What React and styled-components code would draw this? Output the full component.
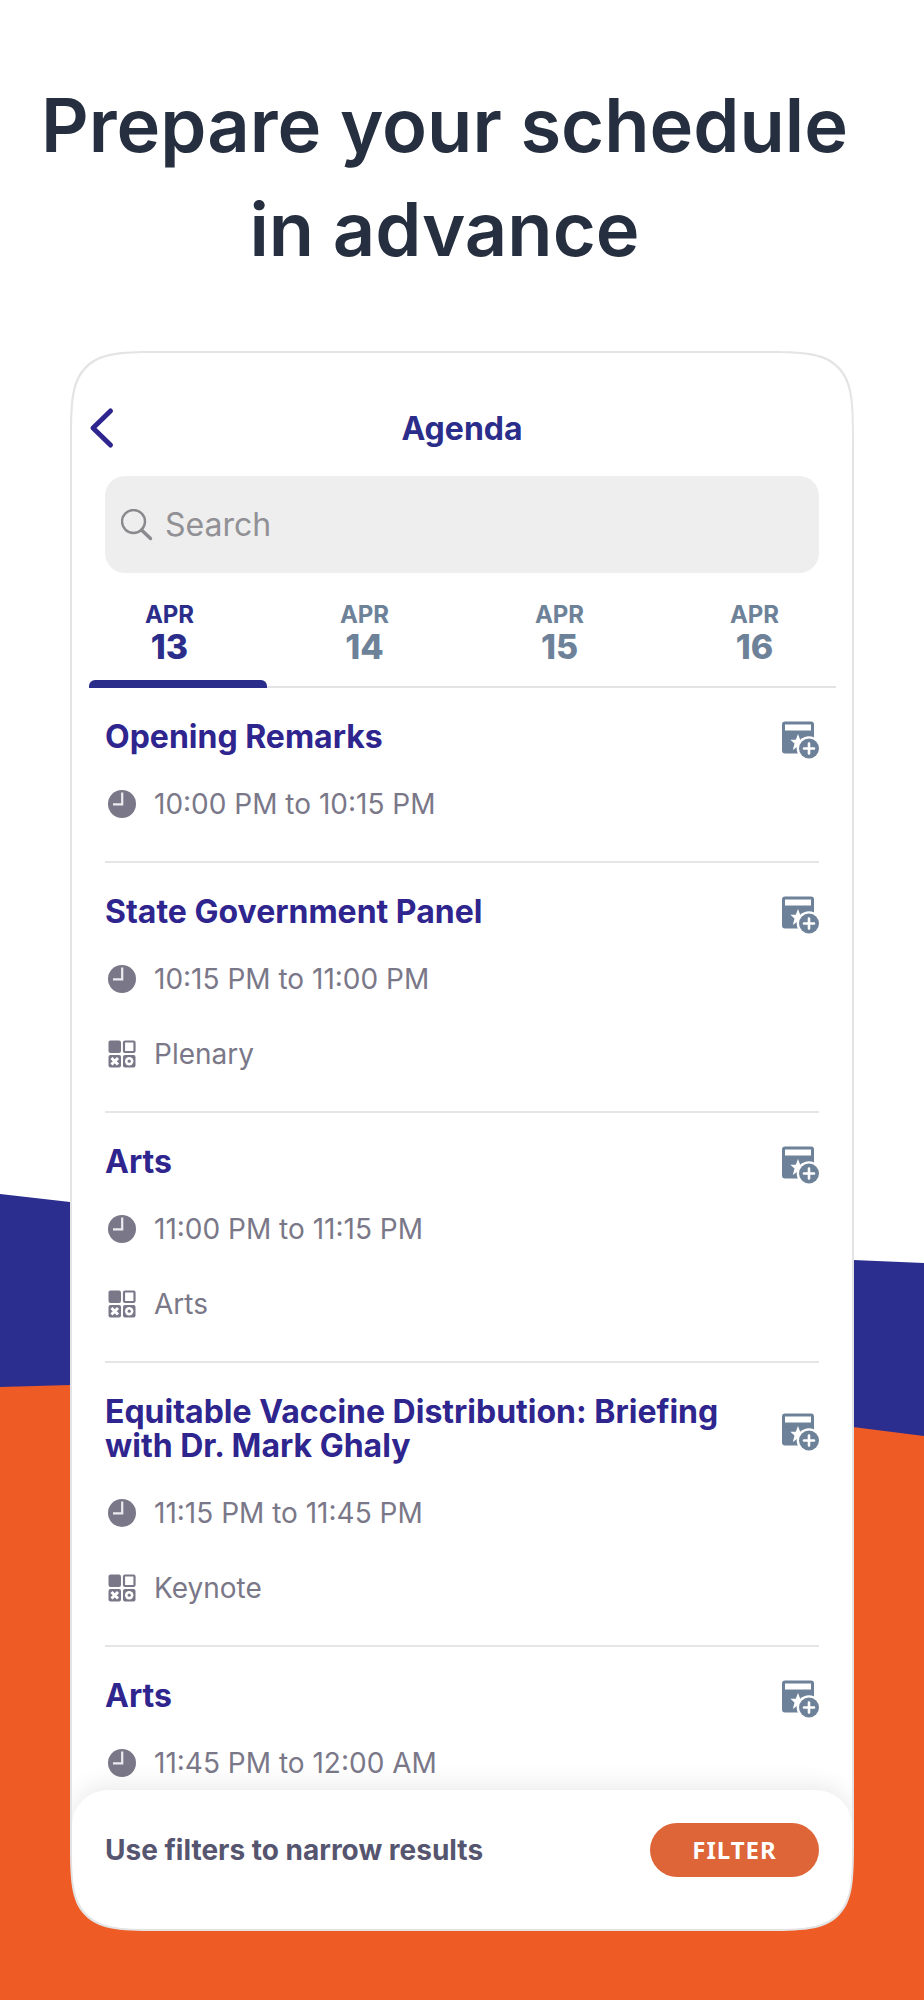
import React, { useState } from "react";
import styled, { createGlobalStyle } from "styled-components";

const GlobalStyle = createGlobalStyle`
  * {
    box-sizing: border-box;
  }
  body {
    margin: 0;
    background: #ffffff;
    font-family: Inter, "Open Sans", sans-serif;
  }
  h1, h2, h3, p, ul {
    margin: 0;
    padding: 0;
  }
  button {
    border: 0;
    padding: 0;
    background: none;
    font: inherit;
    color: inherit;
    cursor: pointer;
  }
`;

const Page = styled.main`
  position: relative;
  overflow: hidden;
  padding: 73px 70px 69px;
`;
const Band = styled.div`
  position: absolute;
  inset: 0;
  z-index: -1;
  background: ${({ $color }) => $color};
  clip-path: ${({ $shape }) => $shape};
`;
const Headline = styled.h1`
  margin: 0 -35px 70px -70px;
  text-align: center;
  font-size: 74px;
  line-height: 104px;
  font-weight: 600;
  color: #262f3f;
`;
const Phone = styled.section`
  overflow: hidden;
  background: #ffffff;
  border: 2px solid #e4e4e4;
  border-radius: 64px;
  @supports (corner-shape: superellipse(2)) {
    border-radius: 96px;
    corner-shape: superellipse(2);
  }
`;

const Header = styled.header`
  display: grid;
  grid-template-columns: 44px 1fr 44px;
  align-items: center;
  padding: 54px 16px 25px;
`;
const BackButton = styled.button`
  height: 44px;
  display: flex;
  align-items: center;
`;
const Title = styled.h2`
  text-align: center;
  font-size: 32px;
  line-height: 44px;
  font-weight: 700;
  color: #2b2d8b;
`;

const SearchBox = styled.label`
  display: flex;
  align-items: center;
  gap: 12px;
  height: 97px;
  margin: 0 33px;
  padding: 0 16px;
  border-radius: 20px;
  background: #eeeeee;
  color: #8a8a8e;
`;
const SearchInput = styled.input`
  flex: 1;
  min-width: 0;
  padding: 0;
  border: 0;
  outline: 0;
  background: transparent;
  font: inherit;
  font-size: 32px;
  color: #56556f;
  &::placeholder {
    color: #919195;
    opacity: 1;
  }
`;

const Tabs = styled.div`
  position: relative;
  display: grid;
  grid-template-columns: repeat(4, 1fr);
  height: 115px;
  &::after {
    content: "";
    position: absolute;
    left: 17px;
    right: 16px;
    bottom: 0;
    height: 2px;
    background: #e2e3e5;
  }
`;
const Tab = styled.button`
  position: relative;
  display: flex;
  flex-direction: column;
  align-items: center;
  padding-top: 28px;
  color: ${({ $active }) => ($active ? "#2b2d8b" : "#6d8299")};
  &::after {
    content: "";
    display: ${({ $active }) => ($active ? "block" : "none")};
    position: absolute;
    z-index: 1;
    left: 17px;
    right: 0;
    bottom: 0;
    height: 8px;
    border-radius: 6px 6px 0 0;
    background: #2b2d8b;
  }
`;
const Month = styled.span`
  font-size: 24px;
  line-height: 28px;
  font-weight: 700;
`;
const Day = styled.span`
  font-size: 34px;
  line-height: 36px;
  font-weight: 800;
`;

const SessionList = styled.ul`
  list-style: none;
  padding: 0 33px;
`;
const Session = styled.li`
  padding: 32px 0 39px;
  border-bottom: 2px solid #e5e5e6;
  &:last-child {
    padding-bottom: 9px;
    border-bottom: 0;
  }
`;
const SessionTop = styled.div`
  display: flex;
  align-items: center;
  gap: 24px;
  margin-bottom: 32px;
`;
const SessionName = styled.h3`
  flex: 1;
  font-size: 32px;
  line-height: 34px;
  font-weight: 700;
  color: #2f258e;
`;
const AddButton = styled.button`
  height: 38px;
  margin: -2px 0 -8px;
  svg {
    display: block;
  }
`;
const Details = styled.div`
  display: flex;
  flex-direction: column;
  gap: 39px;
`;
const Detail = styled.p`
  display: flex;
  align-items: center;
  gap: 18px;
  padding-left: 3px;
  font-size: 28px;
  line-height: 36px;
  color: #7a7888;
`;

const FilterBar = styled.footer`
  position: relative;
  display: flex;
  justify-content: space-between;
  align-items: center;
  padding: 33px 33px 52px;
  border-radius: 36px 36px 0 0;
  background: #ffffff;
  box-shadow: 0 -4px 24px rgba(0, 0, 0, 0.09);
`;
const Hint = styled.p`
  font-size: 28px;
  line-height: 36px;
  font-weight: 700;
  color: #56556f;
`;
const FilterButton = styled.button`
  width: 169px;
  height: 54px;
  border-radius: 27px;
  background: #dd6537;
  color: #ffffff;
  font-family: "Noto Sans", sans-serif;
  font-size: 24px;
  line-height: 54px;
  font-weight: 700;
  letter-spacing: 1px;
`;

const BackIcon = () => (
  <svg width="28" height="44" viewBox="0 0 28 44" fill="none" aria-hidden="true">
    <path d="M22.500 4L5 21L22.500 38" stroke="#2f258e" strokeWidth="5" strokeLinecap="round" strokeLinejoin="round" />
  </svg>
);

const SearchIcon = () => (
  <svg width="32" height="32" viewBox="0 0 32 32" fill="none" stroke="currentColor" aria-hidden="true">
    <circle cx="12.500" cy="12.500" r="11.500" strokeWidth="2.400" />
    <path d="M20.500 21L29.500 29.500" strokeWidth="3.400" strokeLinecap="round" />
  </svg>
);

const ClockIcon = () => (
  <svg width="28" height="28" viewBox="0 0 28 28" fill="none" aria-hidden="true">
    <circle cx="14" cy="14" r="14" fill="currentColor" />
    <path d="M14.200 2.500V14.300H5" stroke="#ececf0" strokeWidth="2.200" />
  </svg>
);

const TrackIcon = () => (
  <svg width="28" height="28" viewBox="0 0 28 28" fill="none" aria-hidden="true">
    <rect x="0.500" y="0.500" width="12.500" height="12.500" rx="2" fill="currentColor" />
    <rect x="16" y="1.500" width="10.500" height="10.500" rx="1" stroke="currentColor" strokeWidth="2.200" />
    <rect x="0.500" y="15" width="12.500" height="12.500" rx="2" fill="currentColor" />
    <path d="M3.500 18L10 24.500M10 18L3.500 24.500" stroke="#fff" strokeWidth="3" />
    <rect x="15" y="15" width="12.500" height="12.500" rx="2" fill="currentColor" />
    <circle cx="21.200" cy="21.200" r="4.200" fill="#fff" />
    <circle cx="21.200" cy="21.200" r="1.600" fill="currentColor" />
  </svg>
);

const AddIcon = () => (
  <svg width="37" height="38" viewBox="0.500 0 37 38" fill="none" aria-hidden="true">
    <rect x="0.500" y="0.500" width="32" height="32" rx="3" fill="#6d8299" />
    <rect x="3.500" y="3.500" width="26" height="6" fill="#fff" />
    <path d="M16.500 13L18.700 18.700H24.500L20 22.500L21.500 29L16.500 25.300L11.300 29L13 22.500L8.800 18.700H14.300Z" fill="#fff" />
    <circle cx="27.500" cy="27.500" r="12.300" fill="#fff" />
    <circle cx="27.500" cy="27.500" r="10" fill="#6d8299" />
    <path d="M27.500 22.500V32.500M22.500 27.500H32.500" stroke="#fff" strokeWidth="2.600" strokeLinecap="round" />
  </svg>
);

const days = ["13", "14", "15", "16"];

const sessions = [
  { id: 1, name: "Opening Remarks", time: "10:00 PM to 10:15 PM" },
  { id: 2, name: "State Government Panel", time: "10:15 PM to 11:00 PM", track: "Plenary" },
  { id: 3, name: "Arts", time: "11:00 PM to 11:15 PM", track: "Arts" },
  {
    id: 4,
    name: "Equitable Vaccine Distribution: Briefing with Dr. Mark Ghaly",
    time: "11:15 PM to 11:45 PM",
    track: "Keynote",
  },
  { id: 5, name: "Arts", time: "11:45 PM to 12:00 AM" },
];

const App = () => {
  const [day, setDay] = useState("13");

  return (
    <Page>
      <GlobalStyle />
      <Band $color="#2b2d8f" $shape="polygon(0 1194px, 70px 1202px, 853px 1260px, 100% 1263px, 100% 100%, 0 100%)" />
      <Band $color="#ee5b25" $shape="polygon(0 1387px, 70px 1385px, 853px 1427px, 100% 1436px, 100% 100%, 0 100%)" />
      <Headline>
        Prepare your schedule
        <br />
        in advance
      </Headline>
      <Phone>
        <Header>
          <BackButton aria-label="Back">
            <BackIcon />
          </BackButton>
          <Title>Agenda</Title>
        </Header>
        <SearchBox>
          <SearchIcon />
          <SearchInput type="search" placeholder="Search" aria-label="Search" />
        </SearchBox>
        <Tabs role="tablist">
          {days.map((d) => (
            <Tab key={d} role="tab" aria-selected={d === day} $active={d === day} onClick={() => setDay(d)}>
              <Month>APR</Month>
              <Day>{d}</Day>
            </Tab>
          ))}
        </Tabs>
        <SessionList>
          {sessions.map((s) => (
            <Session key={s.id}>
              <SessionTop>
                <SessionName>{s.name}</SessionName>
                <AddButton aria-label={`Add ${s.name}`}>
                  <AddIcon />
                </AddButton>
              </SessionTop>
              <Details>
                <Detail>
                  <ClockIcon />
                  {s.time}
                </Detail>
                {s.track && (
                  <Detail>
                    <TrackIcon />
                    {s.track}
                  </Detail>
                )}
              </Details>
            </Session>
          ))}
        </SessionList>
        <FilterBar>
          <Hint>Use filters to narrow results</Hint>
          <FilterButton>FILTER</FilterButton>
        </FilterBar>
      </Phone>
    </Page>
  );
};

export default App;
